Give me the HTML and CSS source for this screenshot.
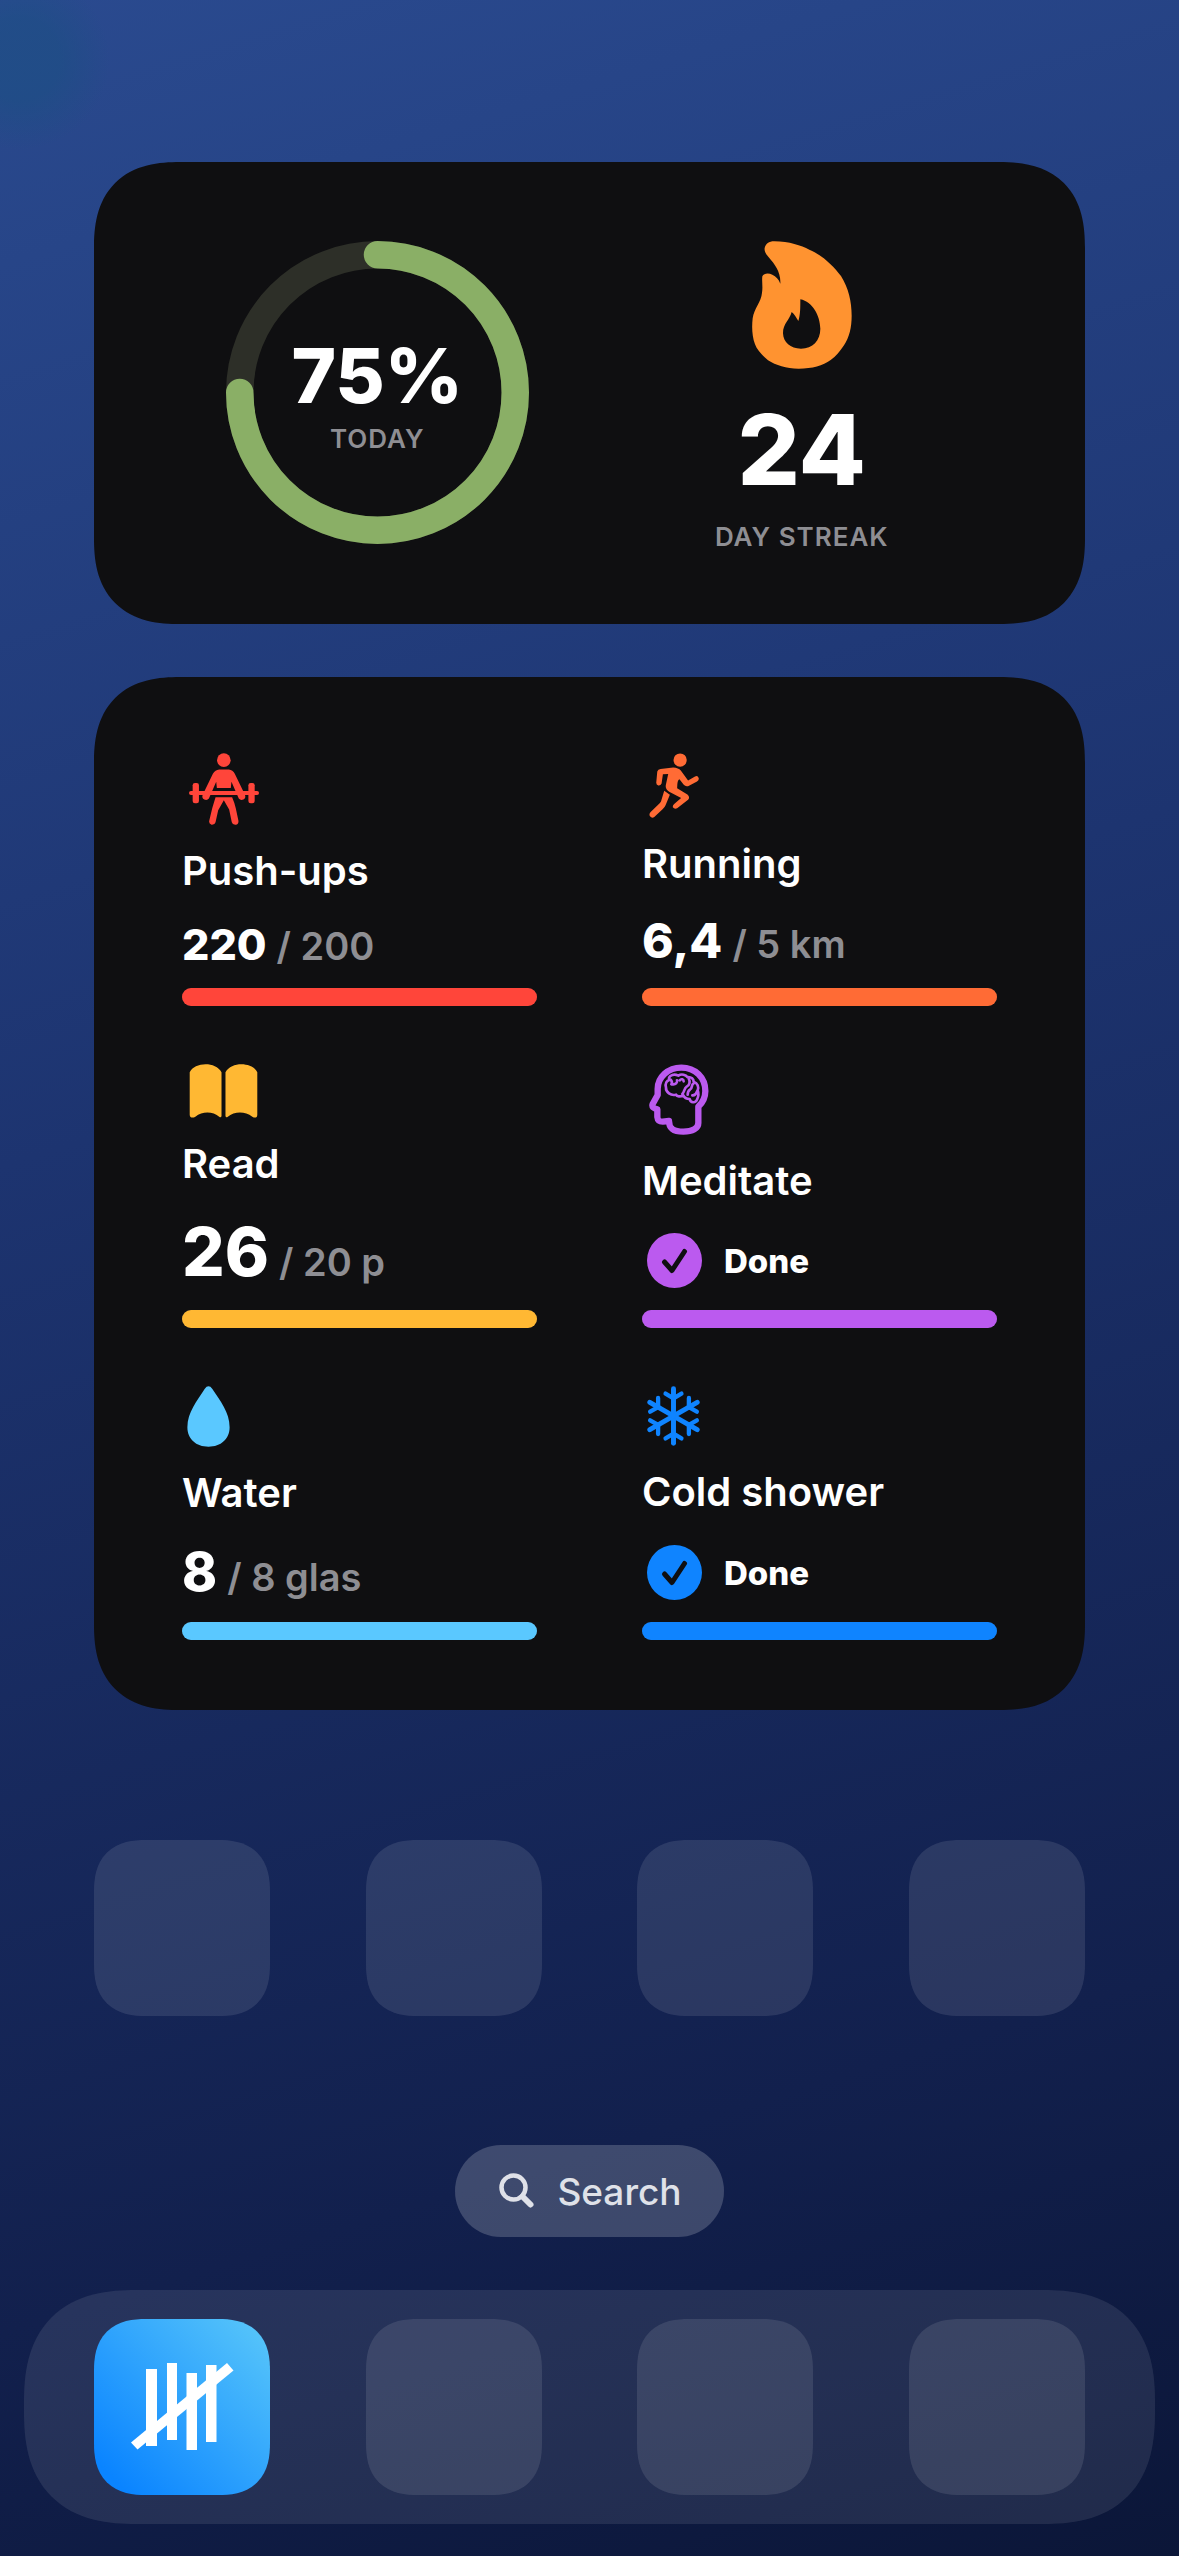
FILE: index.html
```html
<!DOCTYPE html>
<html lang="en">
<head>
  <meta charset="UTF-8" />
  <meta name="viewport" content="width=device-width, initial-scale=1.0"/>
  <title>Habits - Home Screen</title>
  <link rel="stylesheet" href="styles.css">
</head>
<body>

  <main class="home">
    <section class="widget summary">
      <div class="ring">
        <svg class="ring-svg" viewBox="0 0 303 303" aria-hidden="true">
          <circle class="ring-track" cx="151.5" cy="151.5" r="137.75"/>
          <circle class="ring-fill" cx="151.5" cy="151.5" r="137.75" pathLength="100" stroke-dasharray="75 100" transform="rotate(-90 151.5 151.5)"/>
        </svg>
        <div class="ring-text">
          <div class="percent">75%</div>
          <div class="caption">TODAY</div>
        </div>
      </div>
      <div class="streak">
        <svg width="100" height="128" viewBox="458 303 300 384" aria-hidden="true">
          <path fill="#ff9330" fill-rule="evenodd" d="M525 304C570 304 605 317 630 329C665 343 700 375 725 408C748 445 757 485 757 527C757 562 750 592 734 616C722 634 710 650 694 660C670 677 640 686 598 686C560 686 530 676 506 661C490 647 474 632 467 613C458 590 457 560 460 535C464 505 486 485 488 458C491 440 487 425 489 409C494 399 508 399 519 404C530 409 538 417 543 431C545 395 525 372 510 354C502 344 494 336 496 324C499 312 508 304 525 304Z M603 478C603 505 603 525 597 543C591 533 585 522 577 516C571 540 551 550 551 580C552 607 573 626 605 626C640 626 663 601 663 566C662 527 640 485 603 478Z"/>
        </svg>
        <div class="streak-count">24</div>
        <div class="caption">DAY STREAK</div>
      </div>
    </section>

    <section class="widget habits">
      <article class="habit red">
        <svg class="icon" width="70" height="72" viewBox="87 98 211 216" aria-hidden="true">
          <circle cx="192" cy="119" r="20.500"/>
          <path d="M178 147H207Q219 148 225 160L256 224Q259 234 251 238Q242 241 237 235L215 184L213 203H171L169 184L147 235Q142 241 133 238Q125 234 128 224L159 160Q166 148 178 147Z"/>
          <path d="M167 231H217Q224 247 228 264L236 302Q237 312 228 314Q219 315 216 306L208 268L192 240L175 270L167 306Q164 315 155 314Q146 311 148 302L157 264Z"/>
          <rect x="87" y="212" width="211" height="12" rx="6"/>
          <rect x="98" y="188" width="19" height="61" rx="7"/>
          <rect x="266" y="188" width="19" height="61" rx="7"/>
        </svg>
        <h2 class="name">Push-ups</h2>
        <div class="value"><span class="amount">220</span><span class="goal">/ 200</span></div>
        <div class="bar"><div class="fill" style="width: 100%"></div></div>
      </article>

      <article class="habit orange">
        <svg class="icon" width="50" height="65" viewBox="87 98 151 196" aria-hidden="true">
          <circle cx="181" cy="119" r="20"/>
          <path d="M122 146L160 142Q176 143 183 151L205 181L226 169Q234 165 237 173Q239 180 232 184L205 198Q197 200 192 194L179 177Q172 178 172 204L203 223Q212 231 205 239L172 265Q164 269 159 262Q158 256 163 252L184 234L148 215Q135 206 138 194L145 161L129 162L125 190Q122 197 115 196Q108 194 109 186L112 154Q114 147 122 146Z"/>
          <path d="M133 212L150 224L137 256Q134 263 128 268L103 291Q96 296 90 289Q86 282 92 276L120 249Q124 244 125 238Z"/>
        </svg>
        <h2 class="name">Running</h2>
        <div class="value"><span class="amount mid">6,4</span><span class="goal">/ 5 km</span></div>
        <div class="bar"><div class="fill" style="width: 100%"></div></div>
      </article>

      <article class="habit yellow">
        <svg class="icon" width="69" height="54" viewBox="86 69 206 163" aria-hidden="true">
          <path d="M87 94C101 64 164 60 183 94V226Q182 231 177 229C156 211 126 211 104 228C96 233 87 231 87 222Z"/>
          <path d="M195 94C214 60 277 64 291 94V222C291 231 284 233 276 228C253 211 223 211 201 229Q196 231 195 226Z"/>
        </svg>
        <h2 class="name">Read</h2>
        <div class="value"><span class="amount xlarge">26</span><span class="goal">/ 20 p</span></div>
        <div class="bar"><div class="fill" style="width: 100%"></div></div>
      </article>

      <article class="habit purple">
        <svg class="icon outline" width="60" height="71" viewBox="86 70 180 213" aria-hidden="true">
          <path stroke-width="19" d="M183 81C143 81 112 110 112 145V163L97 190C94 199 99 203 111 206V229C112 239 116 243 127 243L146 241C146 265 161 273 189 273C217 273 234 263 234 247V198C247 186 255 174 255 151C255 111 225 81 183 81Z"/>
          <path stroke-width="8" d="M150 106C160 99 170 103 174 105C184 98 197 103 201 109C214 108 220 116 220 123C232 127 236 139 232 149C236 159 234 169 230 177C226 188 210 187 208 175C198 175 191 169 189 164C180 169 170 168 167 162C152 166 136 155 137 141C133 127 140 120 147 118C145 113 146 109 150 106Z"/>
          <path stroke-width="8" d="M151 117C155 122 157 126 153 131M157 131C166 132 172 126 170 119M178 119C183 113 190 116 190 122M205 113C211 124 207 134 199 138C191 143 193 153 186 160M220 128C211 133 218 142 209 147C203 151 202 155 202 162M216 164C223 165 228 158 230 152"/>
        </svg>
        <h2 class="name">Meditate</h2>
        <div class="done">
          <svg width="55" height="55" viewBox="0 0 55 55" aria-hidden="true">
            <circle cx="27.5" cy="27.5" r="27.5"/>
            <path class="check" d="M17.500 29L25 37.500L37.500 18.500"/>
          </svg>
          <span>Done</span>
        </div>
        <div class="bar"><div class="fill" style="width: 100%"></div></div>
      </article>

      <article class="habit sky">
        <svg class="icon narrow" width="43" height="61" viewBox="79 80 128 182" aria-hidden="true">
          <path d="M143 81Q149 81 154 88C178 124 206 158 206 203C206 238 180 261 143 261C106 261 80 238 80 203C80 158 109 124 132 88Q137 81 143 81Z"/>
        </svg>
        <h2 class="name">Water</h2>
        <div class="value"><span class="amount large">8</span><span class="goal">/ 8 glas</span></div>
        <div class="bar"><div class="fill" style="width: 100%"></div></div>
      </article>

      <article class="habit blue">
        <svg class="icon narrow outline" width="53" height="60" viewBox="82 78 158 181" aria-hidden="true">
          <g id="flakeArm" stroke-width="13">
            <path stroke-width="15" d="M161 86V168"/>
            <path d="M137 101L161 115L185 101"/>
          </g>
          <use href="#flakeArm" transform="rotate(60 161 168.500)"/>
          <use href="#flakeArm" transform="rotate(120 161 168.500)"/>
          <use href="#flakeArm" transform="rotate(180 161 168.500)"/>
          <use href="#flakeArm" transform="rotate(240 161 168.500)"/>
          <use href="#flakeArm" transform="rotate(300 161 168.500)"/>
        </svg>
        <h2 class="name">Cold shower</h2>
        <div class="done">
          <svg width="55" height="55" viewBox="0 0 55 55" aria-hidden="true">
            <circle cx="27.5" cy="27.5" r="27.5"/>
            <path class="check" d="M17.500 29L25 37.500L37.500 18.500"/>
          </svg>
          <span>Done</span>
        </div>
        <div class="bar"><div class="fill" style="width: 100%"></div></div>
      </article>
    </section>

    <div class="app-row">
      <div class="app"></div>
      <div class="app"></div>
      <div class="app"></div>
      <div class="app"></div>
    </div>

    <button class="search" type="button">
      <svg width="36" height="36" viewBox="0 0 36 36" aria-hidden="true">
        <circle cx="14.500" cy="14.500" r="12"/>
        <path d="M23.500 23.500L31.500 31.500" stroke-width="6"/>
      </svg>
      <span>Search</span>
    </button>
  </main>

  <nav class="dock">
    <a class="app tally" href="#" aria-label="Habits">
      <svg width="104" height="90" viewBox="0 0 104 90" aria-hidden="true">
        <rect x="16" y="7" width="11" height="77"/>
        <rect x="37" y="1" width="10" height="77"/>
        <rect x="56.500" y="11" width="10.500" height="77"/>
        <rect x="76" y="3" width="10.500" height="77"/>
        <path d="M1 80.500L97 1L103.500 8.500L7.500 87.500Z"/>
      </svg>
    </a>
    <div class="app"></div>
    <div class="app"></div>
    <div class="app"></div>
  </nav>

</body>
</html>
```
FILE: styles.css
```css
* {
  box-sizing: border-box;
}

body {
  margin: 0;
  min-height: 100vh;
  padding: 162px 24px 30px;
  font-family: Inter, 'Noto Sans', sans-serif;
  color: white;
  background:
    radial-gradient(circle at 20px 60px, rgba(25, 80, 130, 0.5) 40px, transparent 90px),
    linear-gradient(163deg, #2a4a8f 0%, #1d3470 40%, #12204d 80%, #0b1638 100%);
}

.home {
  padding: 0 70px;
  display: flex;
  flex-direction: column;
}

.widget {
  background-color: #0f0f11;
  border-radius: 70px;
  display: grid;
  grid-template-columns: 1fr 1fr;
}

/* summary widget */
.summary {
  padding: 79px 71px 71px;
  justify-items: center;
  align-items: start;
}

.ring {
  display: grid;
  place-items: center;
}

.ring-svg,
.ring-text {
  grid-area: 1 / 1;
}

.ring-svg {
  width: 303px;
  height: 303px;
  fill: none;
  stroke-width: 27.5;
}

.ring-track {
  stroke: #2d2f28;
}

.ring-fill {
  stroke: #8aaf66;
  stroke-linecap: round;
}

.ring-text {
  display: flex;
  flex-direction: column;
  align-items: center;
  gap: 10px;
  padding-top: 6px;
}

.percent {
  font-size: 76px;
  line-height: 76px;
  font-weight: 800;
}

.caption {
  font-size: 26px;
  line-height: 32px;
  font-weight: 600;
  letter-spacing: 1px;
  color: #8e8e93;
}

.streak {
  display: flex;
  flex-direction: column;
  align-items: center;
}

.streak-count {
  font-size: 98px;
  line-height: 98px;
  font-weight: 800;
  margin: 32px 0 22px;
}

/* habits widget */
.habits {
  margin-top: 53px;
  padding: 76px 88px 70px;
  column-gap: 105px;
  row-gap: 58px;
}

.habit {
  display: flex;
  flex-direction: column;
  color: var(--tint);
}

.red { --tint: #ff453a; }
.orange { --tint: #ff6b35; }
.yellow { --tint: #ffb833; }
.purple { --tint: #bb5aef; }
.sky { --tint: #5ac8ff; }
.blue { --tint: #0f84ff; }

.icon {
  margin-left: 7px;
  fill: currentColor;
}

.icon.narrow {
  margin-left: 5px;
}

.outline {
  fill: none;
  stroke: currentColor;
  stroke-linecap: round;
  stroke-linejoin: round;
}

.name {
  margin: 22px 0 23px;
  font-size: 40px;
  line-height: 48px;
  font-weight: 600;
  color: white;
}

.value {
  display: flex;
  align-items: baseline;
  gap: 10px;
  margin-top: auto;
}

.amount {
  font-size: 43px;
  font-weight: 800;
  color: white;
}

.amount.mid {
  font-size: 48px;
}

.amount.large {
  font-size: 53px;
}

.amount.xlarge {
  font-size: 67px;
}

.goal {
  font-size: 38px;
  font-weight: 600;
  color: #8e8e93;
}

.done {
  display: flex;
  align-items: center;
  gap: 22px;
  margin-top: auto;
  padding: 0 0 4px 5px;
  font-size: 33px;
  font-weight: 800;
}

.done svg {
  fill: currentColor;
}

.done span {
  color: white;
}

.check {
  fill: none;
  stroke: #0f0f11;
  stroke-width: 5;
  stroke-linecap: round;
  stroke-linejoin: round;
}

.bar {
  height: 18px;
  margin-top: 18px;
  border-radius: 9px;
  background-color: #2c2c2e;
}

.fill {
  height: 100%;
  border-radius: 9px;
  background-color: var(--tint);
}

/* app icons */
.app-row,
.dock {
  display: flex;
  justify-content: space-between;
}

.app-row {
  margin: 130px 0 129px;
}

.app {
  width: 176px;
  height: 176px;
  border-radius: 42px;
  background-color: rgba(255, 255, 255, 0.1);
}

.search {
  align-self: center;
  display: flex;
  align-items: center;
  gap: 22px;
  height: 92px;
  padding: 0 42px 0 44px;
  border: 0;
  border-radius: 46px;
  background-color: rgba(255, 255, 255, 0.19);
  color: #dfe1e8;
  font-family: inherit;
  font-size: 37px;
  font-weight: 500;
  cursor: pointer;
}

.search svg {
  fill: none;
  stroke: currentColor;
  stroke-width: 4.5;
  stroke-linecap: round;
}

.dock {
  margin-top: 53px;
  padding: 29px 70px;
  border-radius: 98px;
  background-color: rgba(255, 255, 255, 0.09);
}

.tally {
  display: flex;
  align-items: center;
  justify-content: center;
  background: linear-gradient(45deg, #0a84ff 10%, #5ac8fa 100%);
}

.tally svg {
  fill: white;
}

/* smoother corners where the browser has them */
@supports (corner-shape: superellipse(1.3)) {
  .widget,
  .app,
  .dock {
    corner-shape: superellipse(1.3);
  }

  .widget {
    border-radius: 86px;
  }

  .app {
    border-radius: 52px;
  }

  .dock {
    border-radius: 112px;
  }
}
```
